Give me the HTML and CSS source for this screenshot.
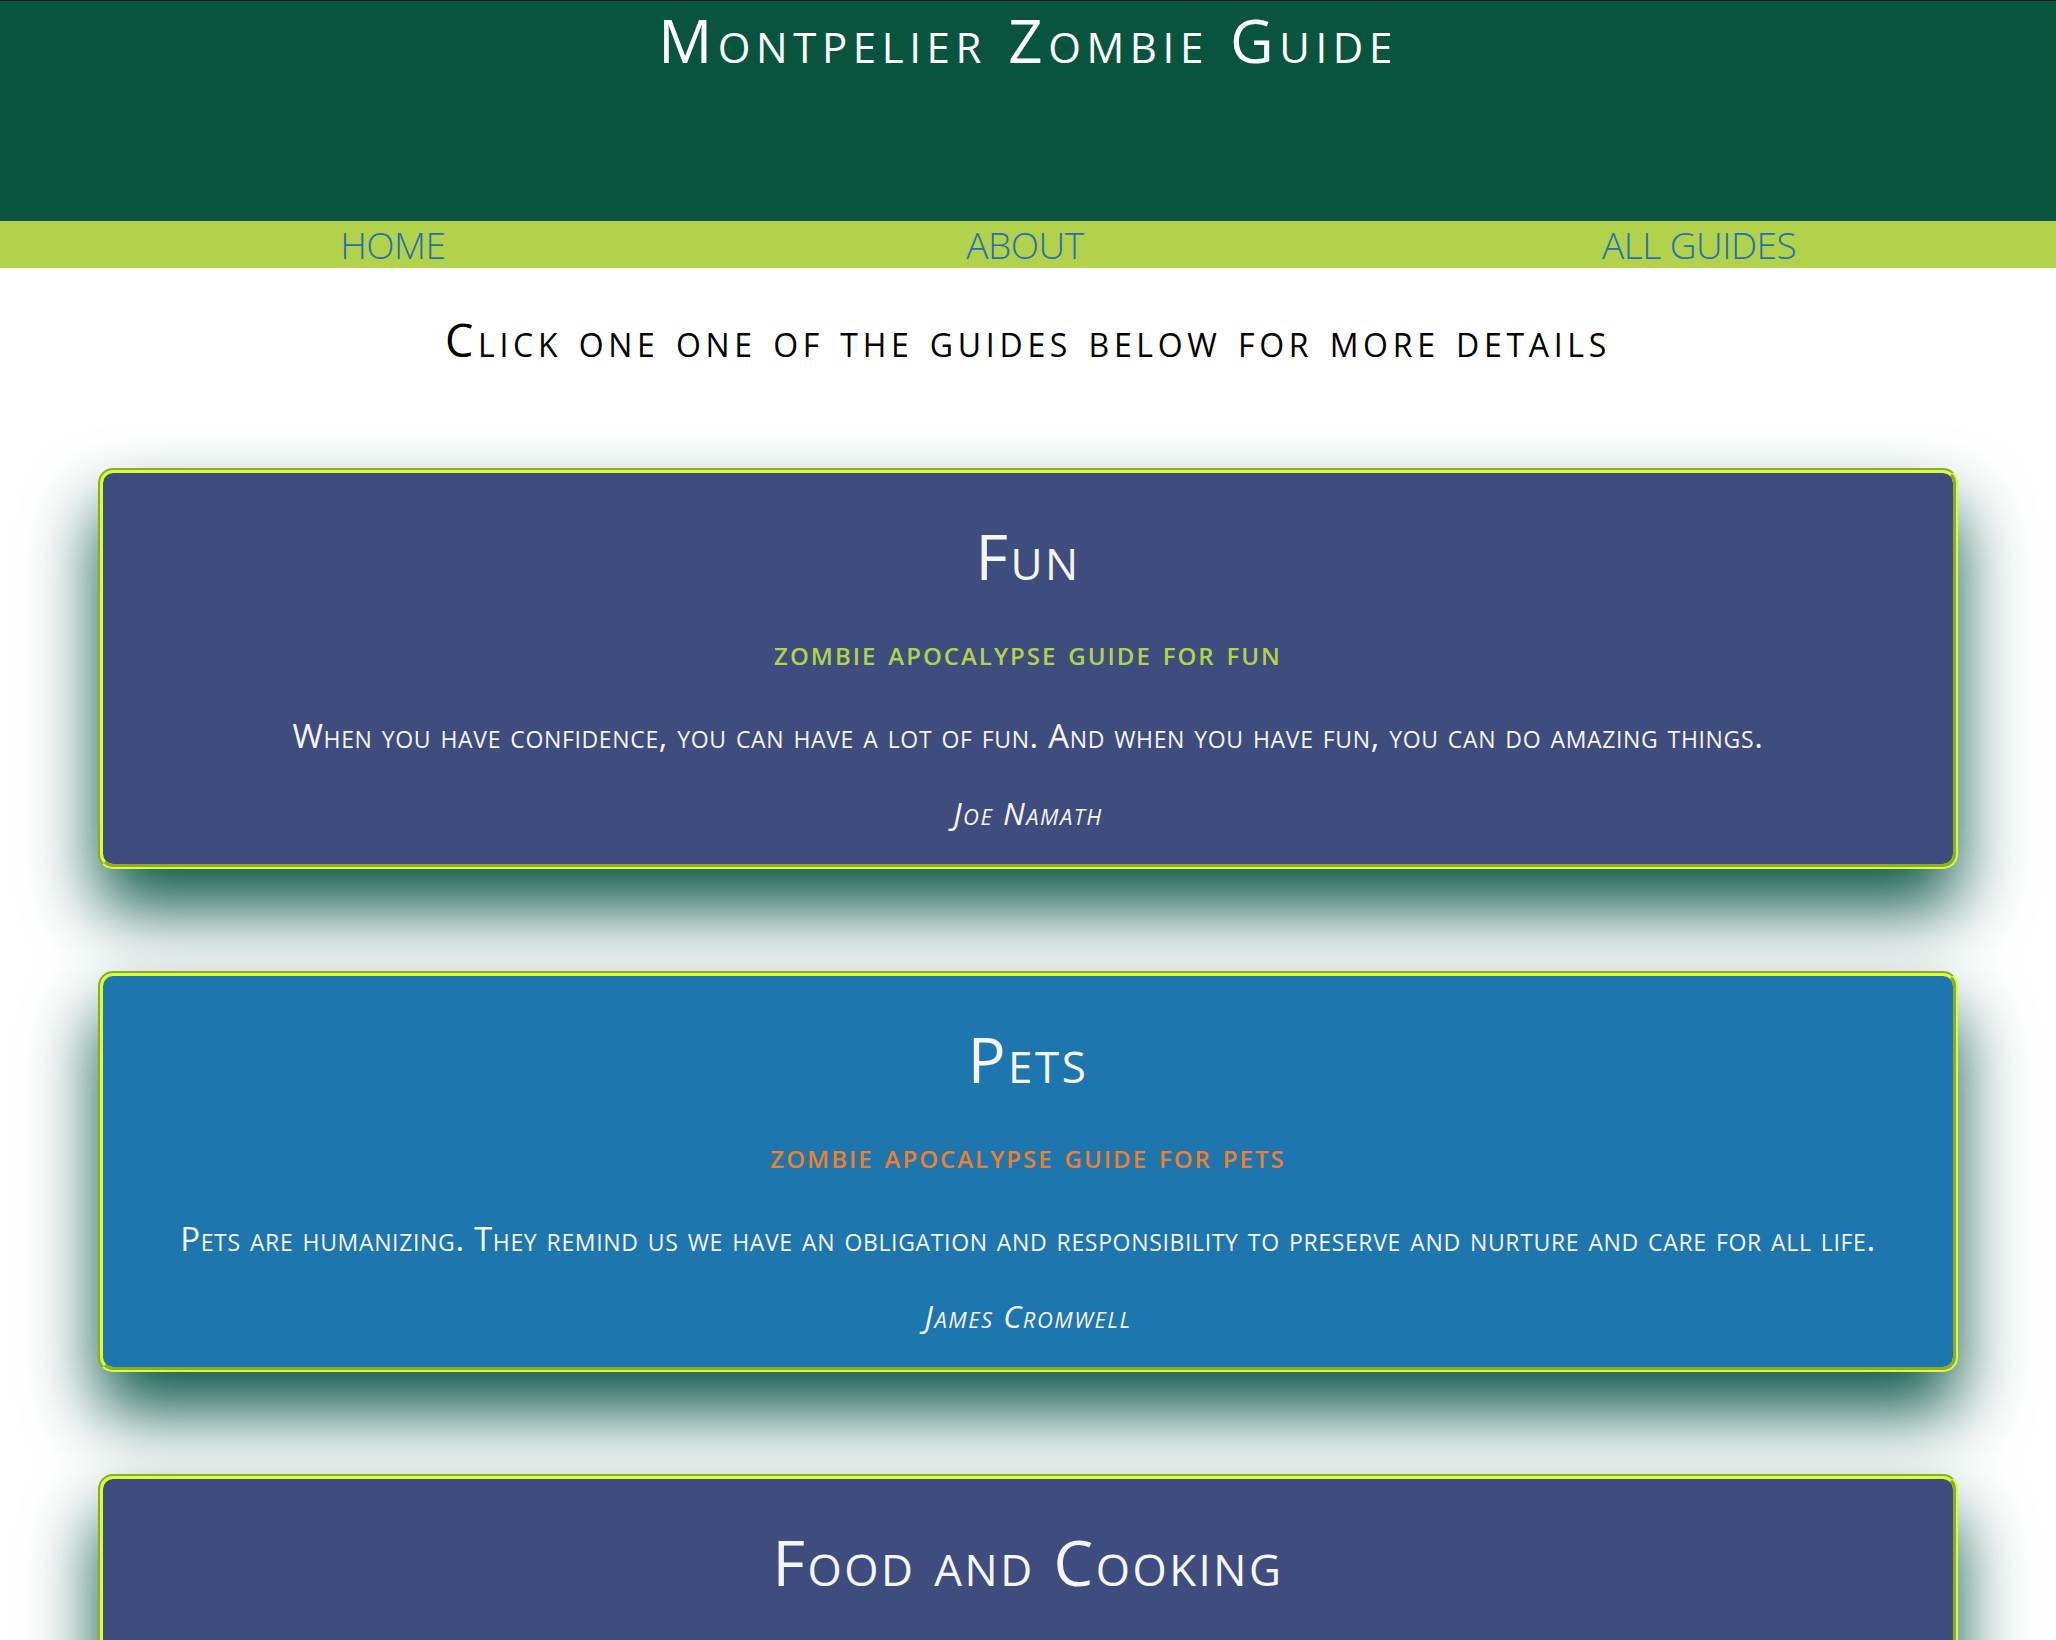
FILE: index.html
```html
<!DOCTYPE html>
<html lang="en">
<head>
<meta charset="utf-8">
<title>Montpelier Zombie Guide</title>
<link rel="stylesheet" href="styles.css">
</head>
<body>
<header class="site-header">
  <h1 class="site-title">Montpelier Zombie Guide</h1>
</header>
<nav class="main-nav">
  <a class="nav-link nav-home" href="#">HOME</a>
  <a class="nav-link nav-about" href="#">ABOUT</a>
  <a class="nav-link nav-guides" href="#">ALL GUIDES</a>
</nav>
<main class="content">
  <h2 class="intro">Click one one of the guides below for more details</h2>
  <section class="guide guide-dark">
    <h3 class="guide-title">Fun</h3>
    <p class="guide-sub sub-lime">zombie apocalypse guide for fun</p>
    <p class="guide-quote">When you have confidence, you can have a lot of fun. And when you have fun, you can do amazing things.</p>
    <p class="guide-author">Joe Namath</p>
  </section>
  <section class="guide guide-blue">
    <h3 class="guide-title">Pets</h3>
    <p class="guide-sub sub-orange">zombie apocalypse guide for pets</p>
    <p class="guide-quote">Pets are humanizing. They remind us we have an obligation and responsibility to preserve and nurture and care for all life.</p>
    <p class="guide-author">James Cromwell</p>
  </section>
  <section class="guide guide-dark">
    <h3 class="guide-title">Food and Cooking</h3>
    <p class="guide-sub sub-lime">zombie apocalypse guide for food and cooking</p>
    <p class="guide-quote">One cannot think well, love well, sleep well, if one has not dined well.</p>
    <p class="guide-author">Virginia Woolf</p>
  </section>
</main>
</body>
</html>
```
FILE: styles.css
```css
html, body {
  margin: 0;
  padding: 0;
  background: #ffffff;
}
body {
  font-family: "Open Sans", "DejaVu Sans", sans-serif;
  border-top: 1px solid #111;
}
.site-header {
  background: #09543f;
  height: 220px;
  text-align: center;
}
.site-title {
  margin: 0;
  padding-top: 3px;
  color: #ffffff;
  font-weight: 500;
  font-size: 60px;
  line-height: 72px;
  font-variant: small-caps;
  letter-spacing: 5.6px;
}
.main-nav {
  background: #b3d24b;
  height: 47px;
  display: grid;
  grid-template-columns: 625fr 638fr 709fr;
  padding-left: 80px;
  padding-right: 2px;
  align-items: center;
}
.nav-link {
  text-align: center;
  color: #2470b4;
  text-decoration: none;
  font-size: 37px;
  font-weight: 300;
  line-height: 47px;
  letter-spacing: -0.5px;
}
.content {
  padding: 0 98px 40px;
}
.intro {
  margin: 0;
  padding-top: 42px;
  text-align: center;
  font-weight: 500;
  font-size: 45px;
  line-height: 60px;
  font-variant: small-caps;
  letter-spacing: 4.7px;
  color: #000;
  margin-bottom: 98px;
}
.guide {
  border: 5px groove #d4ff3a;
  border-radius: 15px;
  box-shadow: 0 40px 70px #0d5848;
  text-align: center;
  color: #f4f4f4;
  height: 401px;
  box-sizing: border-box;
  margin-bottom: 102px;
  padding-top: 45px;
}
.guide-dark { background: #3f4c7e; }
.guide-blue { background: #1e76ae; }
.guide-title {
  margin: 0;
  font-size: 63px;
  font-weight: 400;
  line-height: 76px;
  font-variant: small-caps;
  letter-spacing: 2.5px;
}
.guide-sub {
  margin: 38px 0 0;
  font-size: 34px;
  line-height: 40px;
  font-weight: 600;
  font-variant: small-caps;
  letter-spacing: 2px;
}
.sub-lime { color: #b3d24b; }
.sub-orange { color: #ee7f2d; }
.guide-quote {
  margin: 44px 0 0;
  font-size: 33px;
  line-height: 40px;
  font-variant: small-caps;
  letter-spacing: 0.65px;
}
.guide-author {
  margin: 37px 0 0;
  font-size: 31px;
  line-height: 40px;
  font-style: italic;
  font-variant: small-caps;
  letter-spacing: 1.5px;
}
```
